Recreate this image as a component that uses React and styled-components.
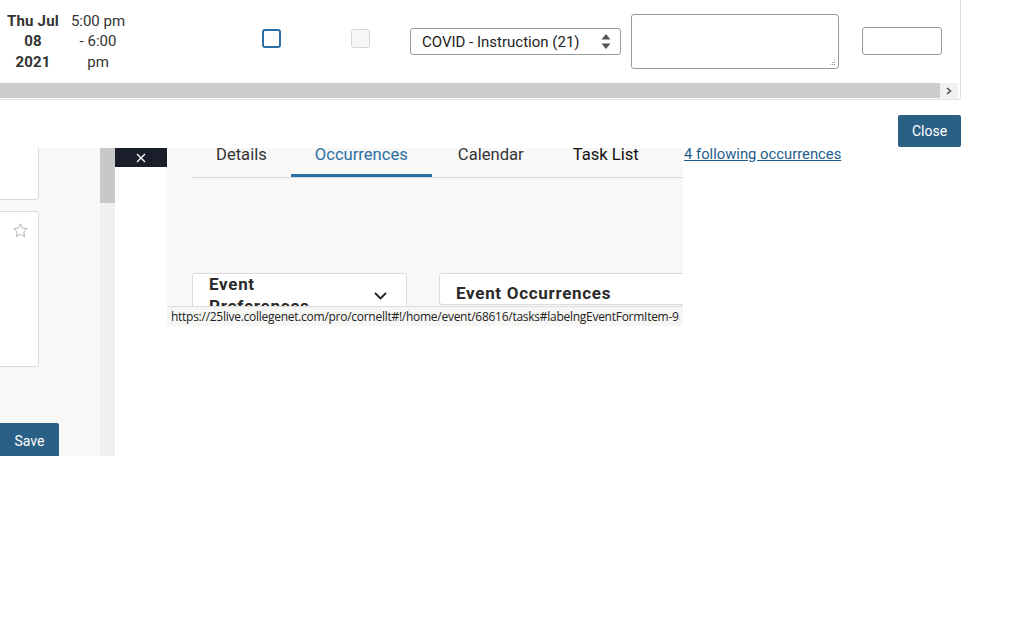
import React from "react";
import styled, { createGlobalStyle } from "styled-components";

const Global = createGlobalStyle`
  html, body { margin: 0; padding: 0; background: #fff; }
  body { font-family: Roboto, "Liberation Sans", sans-serif; color: #333; }
  * { box-sizing: border-box; }
`;

const Page = styled.div`
  width: 1034px;
  height: 637px;
  overflow: hidden;
  background: #fff;
`;

const TableWrap = styled.div`
  width: 961px;
  border-right: 1px solid #dcdcdc;
`;

const Row = styled.div`
  display: grid;
  grid-template-columns: 66px 62px 98px 90px 88px 222px 224px 111px;
  height: 83px;
  align-items: center;
`;

const Cell = styled.div`
  display: flex;
  justify-content: ${(p) => p.$justify || "center"};
  align-items: center;
  padding-left: ${(p) => p.$pl || 0}px;
  text-align: center;
`;

const DateText = styled.div`
  font-size: 15px;
  font-weight: 700;
  line-height: 20.5px;
  color: #333;
  letter-spacing: 0.2px;
`;

const TimeText = styled.div`
  font-size: 15px;
  line-height: 20.5px;
  color: #333;
  padding-left: 2px;
`;

const Check = styled.span`
  display: block;
  width: 19px;
  height: 19px;
  margin-bottom: 7px;
  border-radius: 3px;
  border: ${(p) => (p.$disabled ? "1px solid #d6d6d6" : "2px solid #2c6ea3")};
  background: ${(p) => (p.$disabled ? "#f7f7f6" : "#fff")};
`;

const SelectWrap = styled.div`
  position: relative;
  width: 211px;
  height: 27px;
`;

const Select = styled.select`
  appearance: none;
  -webkit-appearance: none;
  width: 100%;
  height: 100%;
  border: 1px solid #9a9a9a;
  border-radius: 3px;
  background: #fff;
  font-family: Roboto, "Liberation Sans", sans-serif;
  font-size: 15px;
  color: #222;
  padding: 0 0 0 11px;
  outline: none;
`;

const SelectArrow = styled.svg`
  position: absolute;
  right: 10px;
  top: 5px;
  pointer-events: none;
`;

const AreaWrap = styled.div`
  position: relative;
  width: 208px;
  height: 55px;
  margin-left: 5px;
  margin-bottom: 1px;
`;

const Area = styled.textarea`
  width: 100%;
  height: 100%;
  border: 1px solid #9a9a9a;
  border-radius: 3px;
  resize: none;
  outline: none;
  background: #fff;
`;

const Grip = styled.svg`
  position: absolute;
  right: 3px;
  bottom: 3px;
  pointer-events: none;
`;

const Input = styled.input`
  width: 80px;
  height: 28px;
  border: 1px solid #9a9a9a;
  border-radius: 3px;
  margin-left: 12px;
  margin-bottom: 2px;
  outline: none;
`;

const HScroll = styled.div`
  display: flex;
  height: 15px;
  width: 958px;
`;

const HThumb = styled.div`
  flex: 1;
  background: #cdcdcd;
`;

const HArrow = styled.div`
  width: 18px;
  background: #f1f1f1;
  display: flex;
  align-items: center;
  justify-content: center;
`;

const Rule = styled.div`
  width: 961px;
  height: 2px;
  border-top: 1px solid #f4f4f4;
  border-bottom: 1px solid #e4e4e4;
`;

const ButtonRow = styled.div`
  width: 961px;
  display: flex;
  justify-content: flex-end;
  padding-top: 15px;
  padding-bottom: 1px;
`;

const Button = styled.button`
  height: ${(p) => p.$h || 32}px;
  width: ${(p) => p.$w || 63}px;
  background: #2a5f86;
  color: #fff;
  border: none;
  border-radius: 2px;
  font-family: Roboto, "Liberation Sans", sans-serif;
  font-size: 14px;
  padding: 0;
  flex-shrink: 0;
`;

const Lower = styled.div`
  display: flex;
  height: 308px;
  align-items: flex-start;
`;

const LeftPanel = styled.div`
  width: 100px;
  height: 308px;
  background: #f8f8f7;
  overflow: hidden;
  display: flex;
  flex-direction: column;
  align-items: flex-start;
`;

const Card = styled.div`
  width: 200px;
  height: ${(p) => p.$h}px;
  margin-left: -161px;
  margin-top: ${(p) => p.$mt || 0}px;
  background: #fff;
  border: 1px solid #dadada;
  border-radius: 3px;
  display: flex;
  justify-content: flex-end;
  padding: 10px 9px;
  flex-shrink: 0;
`;

const SaveButton = styled(Button)`
  margin-top: 56px;
  border-radius: 0 2px 2px 0;
`;

const VScroll = styled.div`
  width: 15px;
  height: 308px;
  background: #f0f0f0;
`;

const VThumb = styled.div`
  height: 55px;
  background: #c8c8c8;
`;

const ModalEdge = styled.div`
  width: 52px;
  height: 308px;
  background: #fff;
`;

const DarkBar = styled.div`
  height: 19px;
  background: #1a1e2a;
  display: flex;
  align-items: center;
  justify-content: center;
`;

const Content = styled.div`
  position: relative;
  width: 516px;
  height: 178px;
  background: #f8f8f7;
  overflow: hidden;
`;

const Tabs = styled.div`
  display: flex;
  margin: -3px 0 0 25px;
  border-bottom: 1px solid #d9d9d9;
`;

const Tab = styled.div`
  padding: 0 24px 10px;
  font-size: 16.6px;
  line-height: 19px;
  white-space: nowrap;
  color: ${(p) => (p.$active ? "#2b6fa3" : p.$dark ? "#111" : "#333")};
  border-bottom: 3px solid ${(p) => (p.$active ? "#2b6fa3" : "transparent")};
  margin-right: ${(p) => p.$mr || 0}px;
`;

const Cards = styled.div`
  display: flex;
  gap: 32px;
  margin: 95px 0 0 25px;
  align-items: flex-start;
`;

const PanelCard = styled.div`
  width: ${(p) => p.$w}px;
  flex-shrink: 0;
  background: #fff;
  border: 1px solid #dadada;
  border-radius: 3px;
  display: flex;
  align-items: center;
  justify-content: space-between;
  padding: ${(p) => p.$pt}px 19px 0 16px;
`;

const CardTitle = styled.div`
  font-size: 17px;
  font-weight: 700;
  line-height: 22px;
  letter-spacing: 0.7px;
  color: #2a2a2a;
  margin-top: ${(p) => p.$mt || 0}px;
  width: ${(p) => (p.$w ? p.$w + "px" : "auto")};
`;

const StatusBar = styled.div`
  position: absolute;
  left: 0;
  right: 0;
  bottom: 0;
  height: 20px;
  background: #f6f6f5;
  border-top: 1px solid #dedede;
  padding-left: 4px;
  font-family: "Open Sans", "Noto Sans", sans-serif;
  font-size: 12px;
  line-height: 20px;
  color: #222;
  white-space: nowrap;
  letter-spacing: -0.27px;
`;

const Link = styled.a`
  margin: -3px 0 0 1px;
  font-size: 14.8px;
  line-height: 18px;
  color: #1d5d8c;
  text-decoration: underline;
  white-space: nowrap;
`;

const Star = () => (
  <svg width="17" height="17" viewBox="0 0 24 24" fill="none" stroke="#a9a9a9" strokeWidth="1.2" strokeLinejoin="round">
    <path d="M12 2.5l2.9 6.1 6.6.8-4.9 4.6 1.3 6.6L12 17.3l-5.9 3.3 1.3-6.6-4.9-4.6 6.6-.8z" />
  </svg>
);

export default function App() {
  return (
    <Page>
      <Global />
      <TableWrap>
        <Row>
          <Cell>
            <DateText>Thu Jul<br />08<br />2021</DateText>
          </Cell>
          <Cell>
            <TimeText>5:00 pm<br />- 6:00<br />pm</TimeText>
          </Cell>
          <Cell />
          <Cell><Check /></Cell>
          <Cell><Check $disabled /></Cell>
          <Cell $justify="flex-start" $pl={6}>
            <SelectWrap>
              <Select defaultValue="c">
                <option value="c">COVID - Instruction (21)</option>
              </Select>
              <SelectArrow width="10" height="17" viewBox="0 0 10 17">
                <path d="M5 1 L9.5 6.5 H0.5 Z" fill="#555" />
                <path d="M5 16 L9.5 10.5 H0.5 Z" fill="#555" />
              </SelectArrow>
            </SelectWrap>
          </Cell>
          <Cell $justify="flex-start">
            <AreaWrap>
              <Area />
              <Grip width="7" height="7" viewBox="0 0 7 7">
                <rect x="5" y="1" width="1" height="1" fill="#999" />
                <rect x="3" y="3" width="1" height="1" fill="#999" />
                <rect x="5" y="3" width="1" height="1" fill="#999" />
                <rect x="1" y="5" width="1" height="1" fill="#999" />
                <rect x="3" y="5" width="1" height="1" fill="#999" />
                <rect x="5" y="5" width="1" height="1" fill="#999" />
              </Grip>
            </AreaWrap>
          </Cell>
          <Cell $justify="flex-start">
            <Input />
          </Cell>
        </Row>
        <HScroll>
          <HThumb />
          <HArrow>
            <svg width="6" height="8" viewBox="0 0 6 8">
              <path d="M1 1 L4.5 4 L1 7" stroke="#505050" strokeWidth="1.6" fill="none" />
            </svg>
          </HArrow>
        </HScroll>
      </TableWrap>
      <Rule />
      <ButtonRow>
        <Button>Close</Button>
      </ButtonRow>
      <Lower>
        <LeftPanel>
          <Card $h={72} $mt={-20} />
          <Card $h={156} $mt={11}>
            <Star />
          </Card>
          <SaveButton $w={59} $h={36}>Save</SaveButton>
        </LeftPanel>
        <VScroll>
          <VThumb />
        </VScroll>
        <ModalEdge>
          <DarkBar>
            <svg width="10" height="10" viewBox="0 0 10 10">
              <path d="M1 1 L9 9 M9 1 L1 9" stroke="#fff" strokeWidth="1.3" />
            </svg>
          </DarkBar>
        </ModalEdge>
        <Content>
          <Tabs>
            <Tab>Details</Tab>
            <Tab $active $mr={2}>Occurrences</Tab>
            <Tab $mr={1}>Calendar</Tab>
            <Tab $dark>Task List</Tab>
          </Tabs>
          <Cards>
            <PanelCard $w={215} $pt={0}>
              <CardTitle $w={120} $mt={-1}>Event Preferences</CardTitle>
              <svg width="13" height="8" viewBox="0 0 13 8">
                <path d="M1 1 L6.5 6.5 L12 1" stroke="#222" strokeWidth="1.8" fill="none" />
              </svg>
            </PanelCard>
            <PanelCard $w={300} $pt={8}>
              <CardTitle>Event Occurrences</CardTitle>
            </PanelCard>
          </Cards>
          <StatusBar>https://25live.collegenet.com/pro/cornellt#!/home/event/68616/tasks#labelngEventFormItem-9</StatusBar>
        </Content>
        <Link href="#">4 following occurrences</Link>
      </Lower>
    </Page>
  );
}
